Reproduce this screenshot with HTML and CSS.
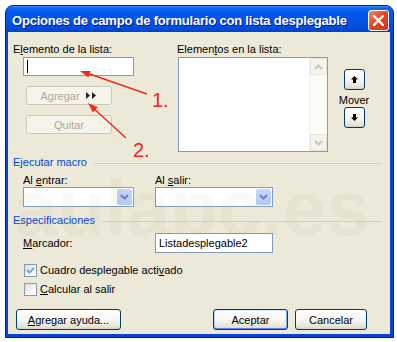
FILE: index.html
```html
<!DOCTYPE html>
<html>
<head>
    <title>Opciones de campo de formulario con lista desplegable</title>
    <link rel="stylesheet" href="styles.css">
</head>
<body>
<div class="page">
    <div class="window">
        <div class="titlebar">
            <span class="title">Opciones de campo de formulario con lista desplegable</span>
            <button class="close-btn">
                <svg width="11" height="11" viewBox="0 0 11 11"><path d="M1 1 L10 10 M10 1 L1 10" stroke="#fff" stroke-width="2.4" stroke-linecap="square"/></svg>
            </button>
        </div>

        <div class="dialog">
            <div class="list-row">
                <div class="col-item">
                    <div class="label">E<u>l</u>emento de la lista:</div>
                    <div class="textbox item-box"><span class="caret"></span></div>
                    <button class="btn disabled add-btn">Agregar
                        <svg width="12" height="7" viewBox="0 0 12 7"><path d="M0 0 L4 3.5 L0 7 Z M6 0 L10 3.5 L6 7 Z" fill="#222"/></svg>
                    </button>
                    <button class="btn disabled remove-btn">Quitar</button>
                </div>
                <div class="col-list">
                    <div class="label">Elemen<u>t</u>os en la lista:</div>
                    <div class="listbox">
                        <div class="scrollbar">
                            <div class="scroll-arrow">
                                <svg width="9" height="6" viewBox="0 0 9 6"><path d="M1 5 L4.5 1.5 L8 5" fill="none" stroke="#c9c7ba" stroke-width="2"/></svg>
                            </div>
                            <div class="scroll-track"></div>
                            <div class="scroll-arrow">
                                <svg width="9" height="6" viewBox="0 0 9 6"><path d="M1 1 L4.5 4.5 L8 1" fill="none" stroke="#c9c7ba" stroke-width="2"/></svg>
                            </div>
                        </div>
                    </div>
                </div>
                <div class="col-move">
                    <button class="btn move-btn">
                        <svg width="7" height="7" viewBox="0 0 7 7"><path d="M3.5 0 L7 3.5 H5 V7 H2 V3.5 H0 Z" fill="#000"/></svg>
                    </button>
                    <div class="label move-label">Mover</div>
                    <button class="btn move-btn">
                        <svg width="7" height="7" viewBox="0 0 7 7"><path d="M3.5 7 L7 3.5 H5 V0 H2 V3.5 H0 Z" fill="#000"/></svg>
                    </button>
                </div>
            </div>

            <div class="group-title">Ejecutar macro</div>
            <div class="macro-row">
                <div class="field">
                    <div class="label">Al <u>e</u>ntrar:</div>
                    <div class="combo">
                        <span class="combo-btn">
                            <svg width="9" height="6" viewBox="0 0 9 6"><path d="M1 1 L4.5 4.5 L8 1" fill="none" stroke="#6283c8" stroke-width="2"/></svg>
                        </span>
                    </div>
                </div>
                <div class="field">
                    <div class="label">Al <u>s</u>alir:</div>
                    <div class="combo wide">
                        <span class="combo-btn">
                            <svg width="9" height="6" viewBox="0 0 9 6"><path d="M1 1 L4.5 4.5 L8 1" fill="none" stroke="#6283c8" stroke-width="2"/></svg>
                        </span>
                    </div>
                </div>
            </div>

            <div class="group-title">Especificaciones</div>
            <div class="mark-row">
                <span class="label mark-label"><u>M</u>arcador:</span>
                <div class="textbox mark-box">Listadesplegable2</div>
            </div>
            <div class="check-row">
                <span class="checkbox">
                    <svg width="9" height="9" viewBox="0 0 9 9"><path d="M1 4 L3.5 6.5 L8 2" fill="none" stroke="#8aa2d6" stroke-width="2"/></svg>
                </span>
                <span>Cuadro desplegable acti<u>v</u>ado</span>
            </div>
            <div class="check-row second">
                <span class="checkbox"></span>
                <span><u>C</u>alcular al salir</span>
            </div>

            <div class="button-row">
                <button class="btn help-btn"><u>A</u>gregar ayuda...</button>
                <button class="btn default ok-btn">Aceptar</button>
                <button class="btn cancel-btn">Cancelar</button>
            </div>
        </div>
    </div>

    <div class="watermark">aulapc.es</div>

    <svg class="notes" width="397" height="342" viewBox="0 0 397 342">
        <line x1="147" y1="94" x2="84" y2="72" stroke="#ee2a1a" stroke-width="1.5"/>
        <polygon points="80,71 90.6,70.9 88.3,77.6" fill="#ee2a1a"/>
        <line x1="126" y1="138" x2="91" y2="106" stroke="#ee2a1a" stroke-width="1.5"/>
        <polygon points="88,103 97.7,107.2 93,112.4" fill="#ee2a1a"/>
        <text x="152" y="107" class="note-text">1.</text>
        <text x="133" y="157" class="note-text">2.</text>
    </svg>
</div>
</body>
</html>
```

FILE: styles.css
```css
body {
    margin: 0;
    background: #fff;
    font-family: "Liberation Sans", Arial, sans-serif;
    font-size: 11px;
    color: #000;
}
.page {
    position: relative;
    width: 397px;
    height: 342px;
    overflow: hidden;
}
.window {
    margin: 5px 0 0 5px;
    width: 389px;
    height: 333px;
    box-sizing: border-box;
    background: #0842d6;
    border: 1px solid #0020a8;
    border-radius: 8px 8px 0 0;
    display: flex;
    flex-direction: column;
}
.titlebar {
    height: 26px;
    display: flex;
    align-items: flex-start;
    padding: 0 4px 0 6px;
    border-radius: 7px 7px 0 0;
    background: linear-gradient(#3d8ff8 0, #1068f2 2px, #0058ee 6px, #0055e8 55%, #004ddc 85%, #0040c8 100%);
}
.title {
    font-weight: bold;
    font-size: 13px;
    letter-spacing: -0.2px;
    line-height: 16px;
    padding-top: 7px;
    color: #fff;
    text-shadow: 1px 1px #0a1883;
    white-space: nowrap;
}
.close-btn {
    margin-left: auto;
    margin-top: 4px;
    width: 21px;
    height: 21px;
    padding: 0;
    border: 1px solid #fff;
    border-radius: 3px;
    background: linear-gradient(135deg, #f08b72, #e2492c 45%, #cf3417);
    display: flex;
    align-items: center;
    justify-content: center;
}
.dialog {
    flex: 1;
    margin: 0 3px 3px 2px;
    background: #ece9d8;
    display: flex;
    flex-direction: column;
}
.label {
    line-height: 13px;
    white-space: nowrap;
}
.btn {
    box-sizing: border-box;
    padding: 0;
    border: 1px solid #003c74;
    border-radius: 3px;
    background: linear-gradient(#ffffff, #f6f5f0 55%, #e6e3d9 88%, #d6d0c5);
    font: inherit;
    color: #000;
    display: flex;
    align-items: center;
    justify-content: center;
}
.btn.disabled {
    border-color: #c9c7ba;
    background: #f5f4ea;
    color: #aca899;
}
.btn.default {
    box-shadow: inset 0 1px 0 #cee7ff, inset 0 -1px 0 #6982ee, inset 1px 0 0 #b4cef8, inset -1px 0 0 #8aacf0;
}
.textbox {
    box-sizing: border-box;
    border: 1px solid #7f9db9;
    background: #fff;
}

/* top part */
.list-row {
    display: flex;
    margin-top: 11px;
    padding-left: 5px;
}
.col-item {
    width: 164px;
}
.item-box {
    margin: 1px 0 0 10px;
    width: 111px;
    height: 19px;
    padding: 2px 3px;
}
.caret {
    display: block;
    width: 1px;
    height: 13px;
    background: #000;
}
.add-btn,
.remove-btn {
    margin: 10px 0 0 13px;
    width: 86px;
    height: 19px;
}
.add-btn {
    gap: 6px;
}
.col-list {
    width: 162px;
}
.listbox {
    box-sizing: border-box;
    margin: 1px 0 0 1px;
    width: 150px;
    height: 95px;
    border: 1px solid #7f9db9;
    background: #fff;
    display: flex;
    justify-content: flex-end;
}
.scrollbar {
    width: 17px;
    display: flex;
    flex-direction: column;
    background: #fbfbf8;
    border-left: 1px solid #f0efe8;
}
.scroll-arrow {
    box-sizing: border-box;
    height: 17px;
    border: 1px solid #e8e6da;
    border-radius: 2px;
    background: #f4f3ee;
    display: flex;
    align-items: center;
    justify-content: center;
}
.scroll-track {
    flex: 1;
}
.col-move {
    width: 30px;
    display: flex;
    flex-direction: column;
    align-items: center;
}
.move-btn {
    margin-top: 26px;
    width: 21px;
    height: 21px;
}
.move-label {
    margin: 4px 0 0;
}
.move-label + .move-btn {
    margin-top: 0;
}

/* groups */
.group-title {
    display: flex;
    align-items: center;
    margin-top: 4px;
    padding-left: 5px;
    line-height: 13px;
    color: #0046d5;
}
.group-title::after {
    content: "";
    flex: 1;
    margin: 1px 8px 0 7px;
    border-top: 1px solid #d0d0bf;
}
.macro-row {
    display: flex;
    margin-top: 5px;
    padding-left: 15px;
}
.field {
    width: 132px;
}
.combo {
    box-sizing: border-box;
    width: 111px;
    height: 20px;
    border: 1px solid #7f9db9;
    background: #fff;
    display: flex;
    justify-content: flex-end;
    padding: 1px;
}
.combo.wide {
    width: 118px;
}
.combo-btn {
    width: 15px;
    border-radius: 2px;
    background: linear-gradient(#c6d6fb, #b5c9f5);
    display: flex;
    align-items: center;
    justify-content: center;
}
.macro-row + .group-title {
    margin-top: 7px;
}
.mark-row {
    display: flex;
    align-items: center;
    margin-top: 6px;
    padding-left: 15px;
}
.mark-label {
    width: 132px;
}
.mark-box {
    width: 118px;
    height: 20px;
    padding: 0 3px;
    line-height: 18px;
}
.check-row {
    display: flex;
    align-items: center;
    gap: 3px;
    margin-top: 11px;
    padding-left: 16px;
    line-height: 13px;
}
.check-row.second {
    margin-top: 6px;
}
.checkbox {
    box-sizing: border-box;
    width: 13px;
    height: 13px;
    border: 1px solid #7f9db9;
    background: linear-gradient(135deg, #dcdcd5, #f6f6f3 60%, #fff);
    display: flex;
    align-items: center;
    justify-content: center;
}
.button-row {
    display: flex;
    margin-top: 13px;
    padding-left: 8px;
}
.help-btn {
    width: 105px;
    height: 21px;
}
.ok-btn {
    margin-left: 92px;
    width: 75px;
    height: 21px;
}
.cancel-btn {
    margin-left: 7px;
    width: 72px;
    height: 21px;
}

/* overlays */
.watermark {
    position: absolute;
    left: 14px;
    top: 168px;
    font-family: "Liberation Sans", Arial, sans-serif;
    font-weight: bold;
    font-size: 78px;
    letter-spacing: 0;
    line-height: 80px;
    color: rgba(120, 110, 70, 0.045);
    pointer-events: none;
}
.notes {
    position: absolute;
    left: 0;
    top: 0;
}
.note-text {
    font-family: "Liberation Sans", Arial, sans-serif;
    font-size: 20px;
    fill: #ee2a1a;
}
```
